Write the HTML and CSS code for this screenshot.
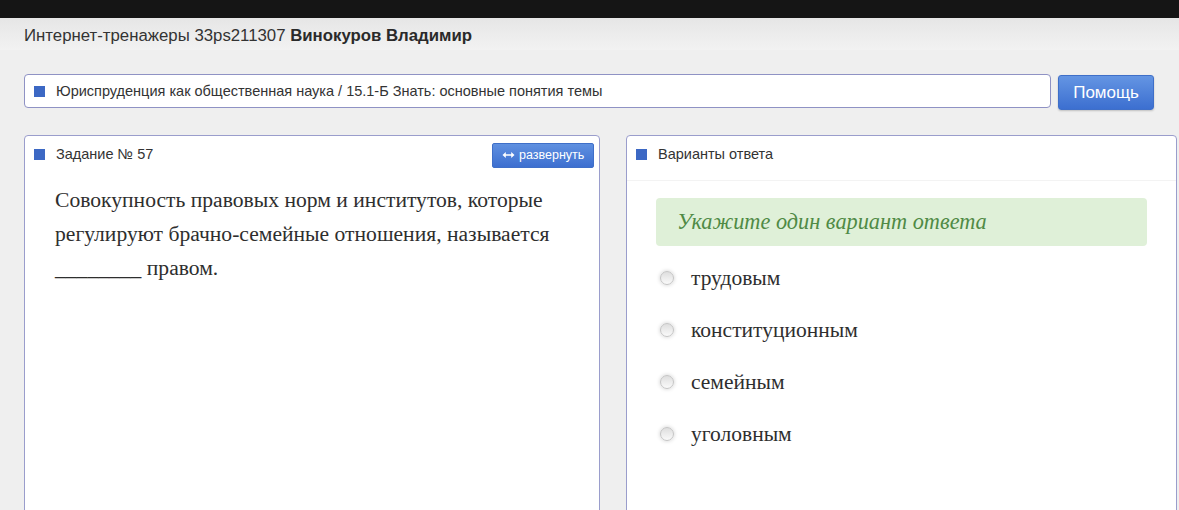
FILE: index.html
```html
<!DOCTYPE html>
<html lang="ru">
  <head>
    <meta charset="UTF-8" />
    <meta name="viewport" content="width=device-width, initial-scale=1.0" />
    <title>Интернет-тренажеры</title>
    <link rel="stylesheet" href="styles.css">
  </head>
  <body>
    <div class="topbar"></div>
    <div class="header">
      Интернет-тренажеры 33ps211307 <b>Винокуров Владимир</b>
    </div>

    <div class="main">
      <div class="topic-row">
        <div class="topic">
          <span class="marker"></span>
          Юриспруденция как общественная наука / 15.1-Б Знать: основные понятия темы
        </div>
        <button class="help-btn">Помощь</button>
      </div>

      <div class="panels">
        <div class="panel">
          <div class="panel-head">
            <span class="marker"></span>
            <span class="panel-title">Задание № 57</span>
            <button class="expand-btn">
              <svg width="13" height="8" viewBox="0 0 13 8">
                <path d="M0.5 4 L3.8 1 L3.8 3.2 L9.2 3.2 L9.2 1 L12.5 4 L9.2 7 L9.2 4.8 L3.8 4.8 L3.8 7 Z" fill="#fff" />
              </svg>
              развернуть
            </button>
          </div>
          <div class="question">
            Совокупность правовых норм и институтов, которые регулируют
            брачно-семейные отношения, называется ________ правом.
          </div>
        </div>

        <div class="panel">
          <div class="panel-head answers-head">
            <span class="marker"></span>
            <span class="panel-title">Варианты ответа</span>
          </div>
          <div class="answers">
            <div class="hint">Укажите один вариант ответа</div>
            <label class="option"><span class="radio"></span>трудовым</label>
            <label class="option"><span class="radio"></span>конституционным</label>
            <label class="option"><span class="radio"></span>семейным</label>
            <label class="option"><span class="radio"></span>уголовным</label>
          </div>
        </div>
      </div>
    </div>
  </body>
</html>
```

FILE: styles.css
```css
body {
  margin: 0;
  font-family: "Liberation Sans", Arial, sans-serif;
  background-color: #efefef;
  color: #333;
  overflow: hidden;
}
.topbar {
  height: 18px;
  background-color: #151515;
}
.header {
  height: 32px;
  line-height: 35px;
  padding: 0 24px;
  font-size: 16.8px;
  color: #333;
  background: linear-gradient(#e6e6e6, #f2f2f2);
}
.header b {
  color: #2a2a2a;
}
.main {
  padding: 24px 2px 0 24px;
}
.topic-row {
  display: flex;
  gap: 7px;
  padding-right: 23px;
  align-items: flex-start;
}
.topic {
  flex: 1;
  height: 32px;
  display: flex;
  align-items: center;
  padding-left: 9px;
  background-color: #fff;
  border: 1px solid #8f92c4;
  border-radius: 4px;
  font-size: 14.5px;
  color: #333;
}
.marker {
  display: inline-block;
  width: 11px;
  height: 11px;
  background-color: #3c68c4;
  margin-right: 11px;
  flex-shrink: 0;
}
.help-btn {
  width: 96px;
  height: 35px;
  margin-top: 1px;
  border: 1px solid #3f6fc8;
  border-radius: 3px;
  background: linear-gradient(#6495e3, #3c6fd0);
  color: #fff;
  font-family: "Liberation Sans", Arial, sans-serif;
  font-size: 17px;
  box-shadow: 0 1px 2px rgba(0, 0, 0, 0.2);
}
.panels {
  display: grid;
  grid-template-columns: 576px 551px;
  gap: 26px;
  margin-top: 25px;
}
.panel {
  height: 420px;
  background-color: #fff;
  border: 1px solid #9a9dcc;
  border-radius: 4px;
}
.panel-head {
  display: flex;
  align-items: center;
  height: 36px;
  padding: 0 5px 0 9px;
}
.panel-title {
  font-size: 14.5px;
  color: #333;
  flex: 1;
}
.expand-btn {
  display: flex;
  align-items: center;
  gap: 4px;
  height: 25px;
  width: 102px;
  margin-top: 2px;
  padding: 0 0 0 9px;
  border: 1px solid #3f6fc8;
  border-radius: 2px;
  background: linear-gradient(#5f90e0, #3d6fd0);
  color: #fff;
  font-family: "Liberation Sans", Arial, sans-serif;
  font-size: 12.5px;
}
.question {
  padding: 11px 30px 0 30px;
  font-family: "Liberation Serif", "Times New Roman", serif;
  font-size: 21.6px;
  line-height: 34px;
  color: #2e2e2e;
}
.answers-head {
  height: 36px;
  padding-bottom: 8px;
  border-bottom: 1px solid #f3f3f3;
}
.answers {
  padding: 17px 29px 0 29px;
}
.hint {
  height: 48px;
  line-height: 48px;
  padding-left: 21px;
  background-color: #dff0d8;
  border-radius: 4px;
  font-family: "Liberation Serif", "Times New Roman", serif;
  font-style: italic;
  font-size: 22.3px;
  color: #4f8a45;
  margin-bottom: 6px;
}
.option {
  display: flex;
  align-items: center;
  height: 52px;
  padding-left: 4px;
  font-family: "Liberation Serif", "Times New Roman", serif;
  font-size: 21.5px;
  color: #2e2e2e;
}
.radio {
  width: 12px;
  height: 12px;
  border: 1px solid #c4c4c4;
  border-radius: 50%;
  background: linear-gradient(#dedede, #fafafa);
  box-shadow: 0 0 4px rgba(0, 0, 0, 0.2);
  margin-right: 17px;
}
```
